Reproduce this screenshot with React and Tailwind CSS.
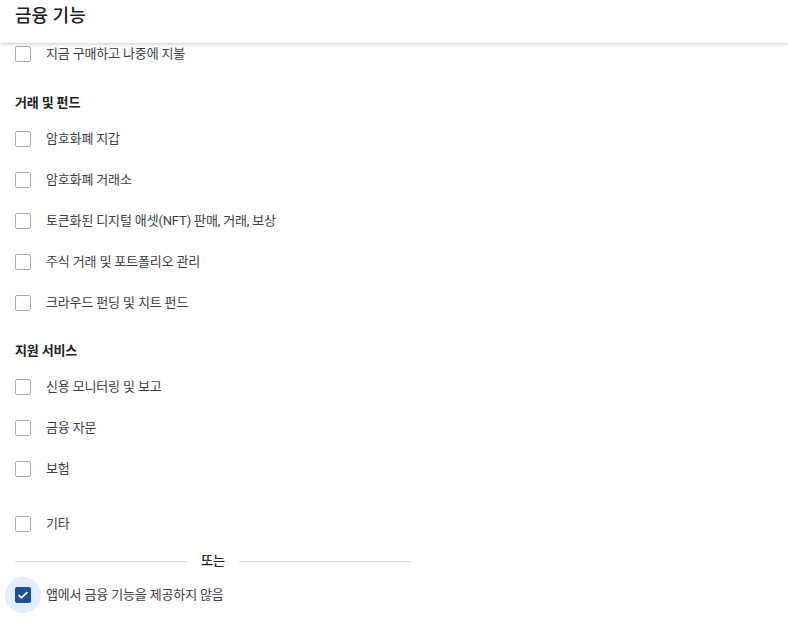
import React from 'react';

const font = { fontFamily: 'Roboto, "Noto Sans CJK KR", sans-serif' };

function Box({ checked }) {
  if (checked) {
    return (
      <span className="relative flex h-4 w-4 shrink-0 items-center justify-center">
        <span className="absolute -inset-[10px] rounded-full bg-[#e3edfb]" />
        <span className="relative flex h-4 w-4 items-center justify-center rounded-[2px] bg-[#1d4f9f]">
          <svg viewBox="0 0 16 16" className="h-[14px] w-[14px]" fill="none" stroke="#fff" strokeWidth="2">
            <path d="M3 8.2l3.1 3.1L13 4.6" />
          </svg>
        </span>
      </span>
    );
  }
  return <span className="h-4 w-4 shrink-0 rounded-[2px] border border-[#a8abb0] bg-white" />;
}

function Row({ label, checked, className = 'h-[41px]' }) {
  return (
    <div className={`flex items-center gap-[15px] ${className}`}>
      <Box checked={checked} />
      <span className="text-[13px] leading-5 tracking-[-0.15px] text-[#3c4043]">{label}</span>
    </div>
  );
}

function Heading({ children, className }) {
  return (
    <div className={`h-5 text-[13px] font-bold leading-5 tracking-[-0.15px] text-[#202124] ${className}`}>
      {children}
    </div>
  );
}

export default function App() {
  return (
    <div className="h-[626px] w-[788px] overflow-hidden bg-white" style={font}>
      {/* Header */}
      <div className="relative z-10 h-[43px] bg-white px-[15px] pt-[5px] shadow-[0_1px_3px_rgba(0,0,0,0.22)]">
        <h1 className="text-[18px] font-medium leading-[22px] text-[#202124]">금융 기능</h1>
      </div>

      <div className="px-[15px]">
        <Row label="지금 구매하고 나중에 지불" className="h-[22px]" />

        <Heading className="mt-[28px] mb-[5px]">거래 및 펀드</Heading>
        <Row label="암호화폐 지갑" />
        <Row label="암호화폐 거래소" />
        <Row label="토큰화된 디지털 애셋(NFT) 판매, 거래, 보상" />
        <Row label="주식 거래 및 포트폴리오 관리" />
        <Row label="크라우드 펀딩 및 치트 펀드" />

        <Heading className="mt-[18px] mb-[5px]">지원 서비스</Heading>
        <Row label="신용 모니터링 및 보고" />
        <Row label="금융 자문" />
        <Row label="보험" />

        <div className="mt-[14px]">
          <Row label="기타" />
        </div>

        {/* Divider */}
        <div className="mt-[7px] flex h-5 w-[396px] items-center gap-[14px]">
          <div className="h-px flex-1 bg-[#dadce0]" />
          <span className="text-[13px] font-medium text-[#202124]">또는</span>
          <div className="h-px flex-1 bg-[#dadce0]" />
        </div>

        <div className="mt-[3px]">
          <Row label="앱에서 금융 기능을 제공하지 않음" checked />
        </div>
      </div>
    </div>
  );
}
